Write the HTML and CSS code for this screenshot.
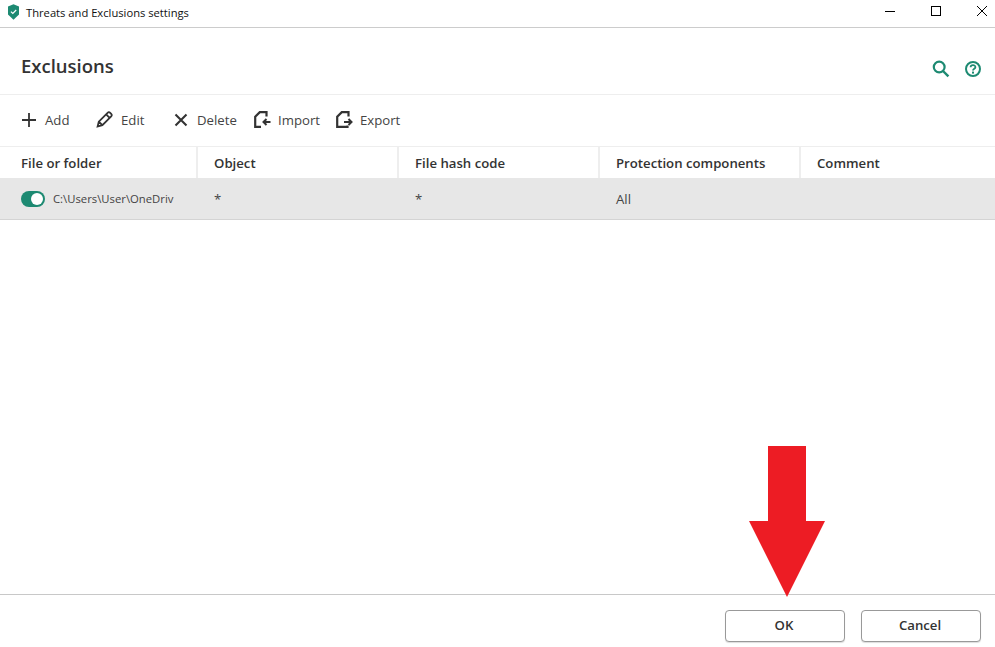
FILE: index.html
```html
<!DOCTYPE html>
<html lang="en">
<head>
<meta charset="utf-8">
<title>Threats and Exclusions settings</title>
<link rel="stylesheet" href="styles.css">
</head>
<body>
<div class="window">
  <header class="titlebar">
    <svg class="app-icon" width="13" height="16" viewBox="0 0 13 16"><path d="M1 2.4 6.5 0.2 12 2.4V10.5L6.5 15.8 1 10.5Z" fill="#1d8a72"/><path d="M3.9 7.6 5.8 9.4 9.2 6" fill="none" stroke="#fff" stroke-width="1.2"/></svg>
    <span class="title">Threats and Exclusions settings</span>
    <div class="win-controls">
      <svg class="win-btn" width="46" height="27" viewBox="0 0 46 27"><path d="M18 11.5H28" stroke="#000" stroke-width="1"/></svg>
      <svg class="win-btn" width="46" height="27" viewBox="0 0 46 27"><rect x="18.5" y="6.5" width="9" height="9" fill="none" stroke="#000"/></svg>
      <svg class="win-btn" width="46" height="27" viewBox="0 0 46 27"><path d="M18 6 28 16M28 6 18 16" stroke="#000" stroke-width="1"/></svg>
    </div>
  </header>
  <section class="page-head">
    <h1>Exclusions</h1>
    <div class="head-icons">
      <svg width="18" height="18" viewBox="0 0 18 18"><circle cx="7.2" cy="7" r="5.4" fill="none" stroke="#1d8a72" stroke-width="2.2"/><path d="M11 11 16.4 16.4" stroke="#1d8a72" stroke-width="2.4"/></svg>
      <svg width="16" height="16" viewBox="0 0 16 16"><circle cx="8" cy="8" r="7" fill="none" stroke="#1d8a72" stroke-width="2"/><path d="M5.6 6.3C5.6 3.4 10.4 3.4 10.4 6.2 10.4 7.8 8 7.8 8 9.6" fill="none" stroke="#1d8a72" stroke-width="1.8"/><rect x="7" y="10.6" width="2" height="2" fill="#1d8a72"/></svg>
    </div>
  </section>
  <nav class="toolbar">
    <div class="tool tool-add">
      <svg width="16" height="16" viewBox="0 0 16 16"><path d="M8 1V15M1 8H15" stroke="#333" stroke-width="1.8"/></svg>
      <span>Add</span>
    </div>
    <div class="tool tool-edit">
      <svg width="17" height="17" viewBox="0 0 17 17"><path d="M1.6 15.4 2.8 10.6 11.6 1.8C12.4 1 13.4 1 14.2 1.8L15.2 2.8C16 3.6 16 4.6 15.2 5.4L6.4 14.2ZM10.2 3.4 13.6 6.8M2.8 10.6 6.4 14.2" fill="none" stroke="#333" stroke-width="1.8"/></svg>
      <span>Edit</span>
    </div>
    <div class="tool tool-delete">
      <svg width="14" height="14" viewBox="0 0 14 14"><path d="M1.5 1.5 12.5 12.5M12.5 1.5 1.5 12.5" stroke="#333" stroke-width="2.1"/></svg>
      <span>Delete</span>
    </div>
    <div class="tool tool-import">
      <svg width="17" height="17" viewBox="0 0 17 17"><path d="M12.5 5.5V1.2H5.8L1.2 5.8V15.8H7" fill="none" stroke="#333" stroke-width="2.2"/><path d="M16.5 11H9.5M12.5 8 9.5 11 12.5 14" fill="none" stroke="#333" stroke-width="2"/></svg>
      <span>Import</span>
    </div>
    <div class="tool tool-export">
      <svg width="17" height="17" viewBox="0 0 17 17"><path d="M12.5 5.5V1.2H5.8L1.2 5.8V15.8H11.5V14.5" fill="none" stroke="#333" stroke-width="2.2"/><path d="M8 11H15M12.5 8 15.5 11 12.5 14" fill="none" stroke="#333" stroke-width="2"/></svg>
      <span>Export</span>
    </div>
  </nav>
  <main class="table">
    <div class="thead">
      <div class="th col-1">File or folder</div>
      <div class="th col-2">Object</div>
      <div class="th col-2">File hash code</div>
      <div class="th col-2">Protection components</div>
      <div class="th col-last">Comment</div>
    </div>
    <div class="trow">
      <div class="td col-1 cell-file"><span class="toggle"></span><span class="path">C:\Users\User\OneDriv</span></div>
      <div class="td col-2">*</div>
      <div class="td col-2">*</div>
      <div class="td col-2">All</div>
      <div class="td col-last"></div>
    </div>
  </main>
  <footer class="footer">
    <button class="btn">OK</button>
    <button class="btn">Cancel</button>
  </footer>
  <svg class="arrow" width="76" height="151" viewBox="0 0 76 151"><path d="M19 0H57V75H76L38 151 0 75H19Z" fill="#ed1c24"/></svg>
</div>
</body>
</html>
```

FILE: styles.css
```css
* { box-sizing: border-box; }
html, body { margin: 0; height: 100%; }
body { background: #fff; color: #333; font-family: "Open Sans", "Noto Sans", sans-serif; overflow: hidden; }
.window { position: relative; display: flex; flex-direction: column; height: 647px; }

.titlebar { display: flex; align-items: center; height: 28px; border-bottom: 1px solid #ccc; padding-left: 7px; padding-bottom: 3px; color: #111; }
.app-icon { margin-right: 6px; }
.title { font-size: 11.2px; flex: 1; }
.win-controls { display: flex; margin-top: 3px; margin-right: -10px; }
.win-btn { display: block; }

.page-head { display: flex; align-items: center; justify-content: space-between; height: 67px; padding: 0 14px 0 21px; border-bottom: 1px solid #eee; }
h1 { margin: 8px 0 0; font-size: 18.5px; font-weight: 600; color: #333; }
.head-icons { display: flex; align-items: center; gap: 15px; margin-top: 16px; }
.head-icons svg { display: block; }

.toolbar { display: flex; align-items: center; height: 52px; border-bottom: 1px solid #eee; padding-left: 21px; padding-bottom: 2px; font-size: 13.2px; color: #444; }
.tool { display: flex; align-items: center; }
.tool svg { display: block; }
.tool-add { width: 75px; gap: 8px; }
.tool-edit { width: 77px; gap: 8px; }
.tool-delete { width: 81px; gap: 9px; padding-left: 1px; }
.tool-import { width: 82px; gap: 7px; }
.tool-export { gap: 7px; }

.table { flex: 1; font-size: 13.2px; }
.thead { display: flex; height: 32px; padding-bottom: 1px; }
.th { display: flex; align-items: center; font-weight: 600; border-right: 2px solid #eee; padding-left: 16px; color: #333; }
.th.col-1 { padding-left: 21px; }
.col-1 { width: 198px; }
.col-2 { width: 201px; }
.th.col-last, .td.col-last { flex: 1; border-right: 0; }
.trow { display: flex; height: 42px; margin-top: -1px; background: #e7e7e7; border-bottom: 1px solid #d4d4d4; }
.td { display: flex; align-items: center; padding-left: 16px; color: #444; }
.cell-file { padding-left: 21px; gap: 8px; }
.toggle { position: relative; display: block; width: 24px; height: 16px; border-radius: 8px; background: #1d8a72; flex: none; }
.toggle::after { content: ""; position: absolute; right: 2px; top: 2px; width: 12px; height: 12px; border-radius: 50%; background: #fff; }
.path { font-size: 11.3px; }

.footer { display: flex; justify-content: flex-end; gap: 16px; height: 53px; border-top: 1px solid #c8c8c8; padding: 15px 14px 0 0; }
.btn { width: 120px; height: 32px; background: #fff; border: 1px solid #999; border-radius: 4px; font: 600 13.2px "Open Sans", "Noto Sans", sans-serif; color: #333; padding: 0 2px 2px 0; box-shadow: 0 1px 1px #ddd; }

.arrow { position: absolute; left: 749px; top: 446px; }
```
